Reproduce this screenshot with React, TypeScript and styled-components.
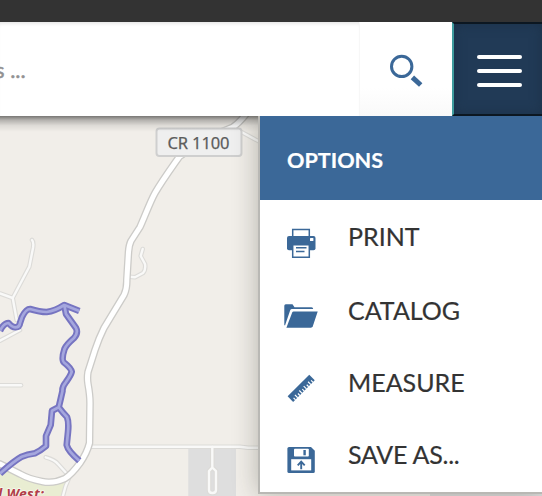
import React from "react";
import styled, { createGlobalStyle } from "styled-components";

const blue = "#3b6898";

const GlobalStyle = createGlobalStyle`
  * { box-sizing: border-box; }
  body { margin: 0; overflow: hidden; font-family: Lato, "Open Sans", sans-serif; }
`;

const Page = styled.div`
  display: flex;
  flex-direction: column;
  width: 542px;
  height: 496px;
  overflow: hidden;
  background: #f1eee9;
`;

const TopStrip = styled.div`
  flex: 0 0 22px;
  background: #333;
`;

const SearchBar = styled.header`
  position: relative;
  z-index: 2;
  display: flex;
  flex: 0 0 94px;
  background: #fff;
`;

const SearchField = styled.div`
  display: flex;
  flex: 1;
  align-items: center;
  padding-top: 2px;
  box-shadow: inset 0 4px 4px -3px #ddd;
  overflow: hidden;
`;

const Placeholder = styled.span`
  margin-left: -5px;
  color: #929292;
  font-size: 22px;
  line-height: 28px;
  white-space: nowrap;
  -webkit-text-stroke: 0.5px #929292;
`;

const SearchButton = styled.button`
  display: flex;
  flex: 0 0 93px;
  align-items: center;
  justify-content: center;
  padding: 0;
  border: 0;
  border-left: 1px solid #f7f7f7;
  background: linear-gradient(#fff 70%, #f9f9f9);
`;

const MenuButton = styled.button`
  display: flex;
  flex: 0 0 90px;
  flex-direction: column;
  align-items: flex-start;
  justify-content: center;
  gap: 9.7px;
  padding: 4px 0 0 22.5px;
  border: solid #0c1721;
  border-width: 2px 0;
  border-left: 2px solid #3e9c9e;
  background: #213a56;
  box-shadow: inset 0 0 12px #1c3249;
`;

const MenuLine = styled.span`
  width: 45.5px;
  height: 4.3px;
  border-radius: 2px;
  background: #fff;
`;

const MapArea = styled.main`
  position: relative;
  flex: 1;
  overflow: hidden;
  background: #f1eee9;
`;

const MapDrawing = styled.svg`
  display: block;
`;

const BarShadow = styled.div`
  position: absolute;
  inset: 0 0 auto;
  height: 16px;
  background: linear-gradient(rgba(0, 0, 0, 0.5), rgba(0, 0, 0, 0.26) 25%, rgba(0, 0, 0, 0.08) 60%, transparent);
`;

const Panel = styled.aside`
  position: absolute;
  top: 0;
  right: 0;
  width: 284px;
  height: 378px;
  border: solid #b9b8b4;
  border-width: 0 0 2px 2px;
  background: #fff;
  box-shadow: 0 0 24px rgba(40, 40, 25, 0.3);
`;

const PanelHeader = styled.h2`
  display: flex;
  align-items: center;
  height: 84px;
  margin: 0;
  padding: 4px 0 0 27px;
  background: ${blue};
  color: #fff;
  font-size: 21.6px;
  line-height: 28px;
  -webkit-text-stroke: 0.2px #fff;
`;

const Options = styled.ul`
  margin: 0;
  padding: 25px 0 0 23px;
  list-style: none;
`;

const Option = styled.li<{ $height?: number; $lift?: number; $tracking?: number }>`
  display: flex;
  gap: 29px;
  height: ${(p) => p.$height ?? 72}px;
  color: #333;
  font-size: 25px;
  line-height: 26px;
  letter-spacing: ${(p) => p.$tracking ?? 0}px;
  -webkit-text-stroke: 0.2px #333;

  span {
    margin-top: ${(p) => -(p.$lift ?? 1)}px;
  }
`;

const Icon = styled.svg`
  flex: 0 0 36px;
  width: 36px;
  height: 36px;
  fill: ${blue};
`;

const PrintIcon = () => (
  <Icon viewBox="0 0 36 36">
    <path d="M9.7 11V4.5h16.6V11" fill="none" stroke={blue} strokeWidth="1.5" />
    <rect x="4" y="11" width="28.5" height="14.3" rx="2" />
    <rect x="27" y="13" width="3.4" height="3" rx=".5" fill="#fff" />
    <path d="M9.7 19.8h16.6v12.4H9.7z" fill="#fff" stroke={blue} strokeWidth="1.5" />
    <path d="M13 22.8h10.5M13 26.5h8.5" fill="none" stroke={blue} strokeWidth="1.4" />
  </Icon>
);

const FolderIcon = () => (
  <Icon viewBox="0 0 36 36">
    <path d="M1.3 27V7.8Q1.3 6.3 2.8 6.3h6.7l2 3h17q1.7 0 1.7 1.8H9q-1.3 0-1.8 1.2L2 27.5z" />
    <path d="M9.2 14.6q.4-1 1.4-1h24.1L29.8 28.3q-.5 1.4-2 1.4H3.4z" />
  </Icon>
);

const RulerIcon = () => (
  <Icon viewBox="0 0 36 36">
    <g transform="translate(18.2 18.3) rotate(-45)">
      <rect x="-15.3" y="-3.9" width="30.6" height="7.8" />
      <path
        d="M-12.2 4.2V1.4M-9.1 4.2V.2M-6 4.2V1.4M-2.9 4.2V.2M.2 4.2V1.4M3.3 4.2V.2M6.4 4.2V1.4M9.5 4.2V.2M12.6 4.2V1.4"
        stroke="#fff"
        strokeWidth="1.2"
      />
    </g>
  </Icon>
);

const SaveIcon = () => (
  <Icon viewBox="0 0 36 36">
    <path d="M6 5h22l3.8 3.8V29.5Q31.8 31 30.3 31H6q-1.6 0-1.6-1.5v-23Q4.4 5 6 5z" />
    <rect x="11" y="6.8" width="14.8" height="7.8" rx=".8" fill="#fff" />
    <rect x="20.4" y="8" width="2.4" height="5.3" />
    <rect x="8.2" y="17.2" width="20" height="11.2" fill="#fff" />
    <path d="M18.2 27.3v-7.5M14.7 23.3l3.5-3.6 3.5 3.6" fill="none" stroke={blue} strokeWidth="1.9" />
  </Icon>
);

const SearchIcon = () => (
  <svg width="36" height="36" viewBox="0 0 36 36" fill="none" stroke={blue}>
    <circle cx="13.7" cy="15.4" r="10.2" strokeWidth="3" />
    <path d="M24.4 26.3l8.3 7.7" strokeWidth="5" />
  </svg>
);

const lanes = [
  "M32 240Q34 242 33 248L29.3 266.7L12.7 298L0 293.5M12.7 298L16.7 320",
  "M0 340.7L20 330",
  "M0 385.3H21",
  "M142.7 249L140.7 256L145 264Q146 270 143 273L135 277.3L129.3 276.7",
  "M45.7 457.3Q55 460 58 464L68 475",
  "M69 478Q65 486 62.7 497",
  "M90 446.7H240L248 447.8H260",
  "M212.3 447V468M212.3 467.5L209 471V490Q209 493 212.3 493Q216 493 216 490V471Z",
  "M241 131.7L260 142",
];

const highway =
  "M247 113Q239 123 233 127Q208 136 179.3 156.7C170 170 162 181 155 193C150 202 145 216 140 227L131 241Q129 245 128.5 252L126.8 280Q127 289 124 295L104 328Q99 338 95 350L88 372Q87 378 88 384Q90 395 90 403L89.5 443Q87 453 80 463Q72 474 65 478.5Q53 484 42 481.5Q29 479 20 474L0 464";

const trail =
  "M0 330.7Q4 323 8.5 323Q12 327.3 15 327.3Q19.5 327.5 20 323L22 317Q26 309 30 309Q40 312 46.7 312Q55 311 64.3 305L79.3 311M64.3 305L66 314Q71 321 76 328Q78.5 333 74 338Q66 345 64.5 349Q61 360 64 362.5Q71 368 71.7 371.7Q71 375 66 382Q62 387 62.5 391Q60 402 58.7 407.3L52 410.7L50.7 425L46 436L46 446Q40 451 35 453.3Q27 454.5 21.7 456.7Q14 461 0 473.5M58.7 407.3Q63 413 67 417Q69 422 68 432L66.7 445Q68 451 79.3 460.7";

const Map = () => (
  <MapDrawing width="542" height="380" viewBox="0 116 542 380" fill="none" strokeLinecap="round" strokeLinejoin="round">
    <path d="M0 467L24 479Q42 487 66 481L61 497H0z" fill="#e9edd2" />
    <path d="M188.3 448H236V497H188.3zM430 485H542V497H430z" fill="#dedede" />
    {lanes.map((d) => (
      <path key={d} d={d} stroke="#dcdbd8" strokeWidth="4.6" />
    ))}
    {lanes.map((d) => (
      <path key={d} d={d} stroke="#f9f9f8" strokeWidth="2.4" />
    ))}
    <path d={highway} stroke="#cccbc8" strokeWidth="7.6" />
    <path d={highway} stroke="#fff" strokeWidth="5" />
    <path d={trail} stroke="#7674c1" strokeWidth="6.6" strokeLinecap="butt" />
    <path d={trail} stroke="#a5a7de" strokeWidth="2.7" strokeLinecap="butt" />
    <rect x="156.5" y="128.5" width="85" height="27.5" rx="3" fill="#efefef" stroke="#cfcfcf" strokeWidth="2" />
    <text
      x="167.5"
      y="148.5"
      fill="#5c5c5c"
      stroke="#5c5c5c"
      strokeWidth=".25"
      fontSize="16.5"
      fontFamily="Noto Sans"
      textLength="62"
    >
      CR 1100
    </text>
    <text
      x="-2"
      y="498.5"
      fill="#b23e49"
      stroke="#fff"
      strokeWidth="1.6"
      strokeOpacity=".7"
      paintOrder="stroke"
      fontSize="14"
      fontWeight="bold"
      fontStyle="italic"
      fontFamily="Noto Sans"
      textLength="46"
    >
      l West:
    </text>
  </MapDrawing>
);

export default function App() {
  return (
    <Page>
      <GlobalStyle />
      <TopStrip />
      <SearchBar>
        <SearchField>
          <Placeholder>s ...</Placeholder>
        </SearchField>
        <SearchButton aria-label="Search">
          <SearchIcon />
        </SearchButton>
        <MenuButton aria-label="Menu">
          <MenuLine />
          <MenuLine />
          <MenuLine />
        </MenuButton>
      </SearchBar>
      <MapArea>
        <Map />
        <BarShadow />
        <Panel>
          <PanelHeader>OPTIONS</PanelHeader>
          <Options>
            <Option $height={73} $lift={2}>
              <PrintIcon />
              <span>PRINT</span>
            </Option>
            <Option>
              <FolderIcon />
              <span>CATALOG</span>
            </Option>
            <Option>
              <RulerIcon />
              <span>MEASURE</span>
            </Option>
            <Option $height={50} $tracking={-0.25}>
              <SaveIcon />
              <span>SAVE AS...</span>
            </Option>
          </Options>
        </Panel>
      </MapArea>
    </Page>
  );
}
